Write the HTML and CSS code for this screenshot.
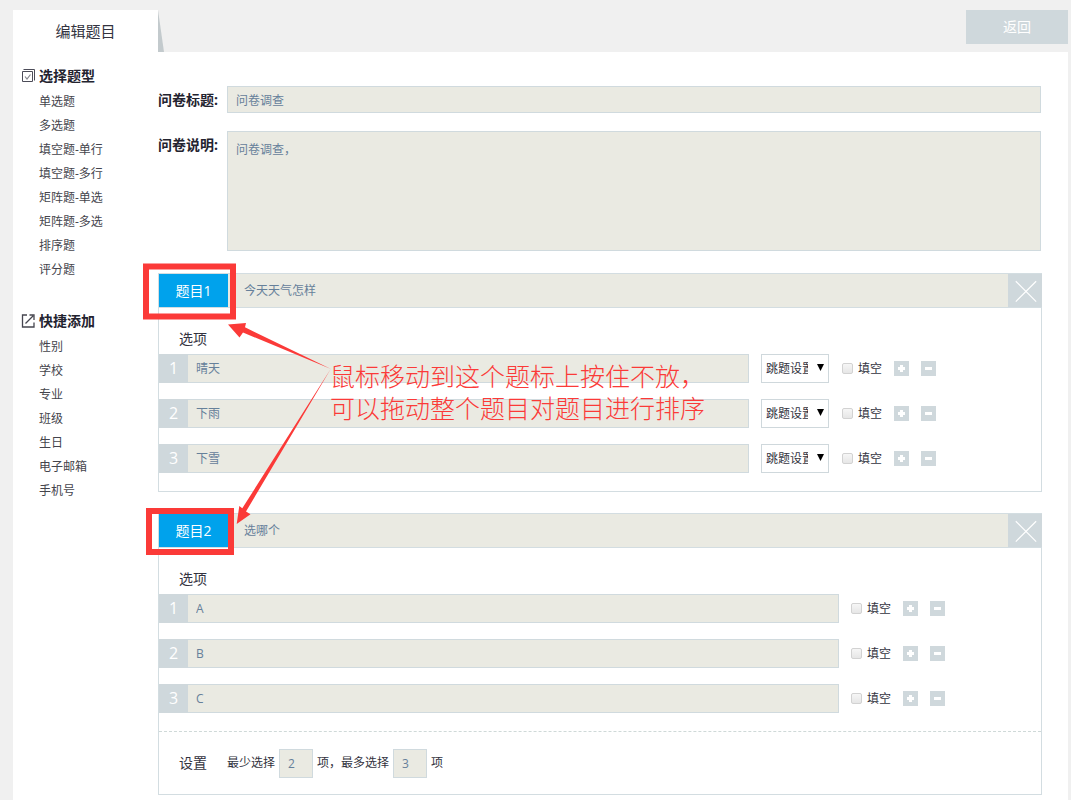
FILE: index.html
```html
<!DOCTYPE html>
<html lang="zh-CN">
<head>
<meta charset="utf-8">
<title>编辑题目</title>
<link rel="stylesheet" href="styles.css">
</head>
<body>
<svg class="defs" aria-hidden="true">
  <symbol id="plus" viewBox="0 0 15 15"><path d="M6 4h3v2h2v3H9v2H6V9H4V6h2z" fill="#fff"/></symbol>
  <symbol id="minus" viewBox="0 0 15 15"><path d="M4 6h7v3H4z" fill="#fff"/></symbol>
  <symbol id="close" viewBox="0 0 34 34"><path d="M7.500 7.500l21 21M28.500 7.500l-21 21" stroke="#fff" stroke-width="1.200" fill="none"/></symbol>
</svg>
<header class="top">
  <h1 class="tab">编辑题目</h1>
  <span class="fold"></span>
  <button class="back" type="button">返回</button>
</header>
<div class="panel">
  <nav class="side">
    <h2 class="side-title">
      <svg class="side-icon" viewBox="0 0 14 14" fill="none" stroke="#4c4c58"><path d="M1.500 2.500h10v10h-10z"/><path d="M2.500 .5h11v11" /><path d="M4 7.500l2 2.500 3.500-4.500" stroke="#85858d" stroke-width="1.200"/></svg>
      选择题型</h2>
    <ul class="side-list">
      <li><a href="#">单选题</a></li>
      <li><a href="#">多选题</a></li>
      <li><a href="#">填空题-单行</a></li>
      <li><a href="#">填空题-多行</a></li>
      <li><a href="#">矩阵题-单选</a></li>
      <li><a href="#">矩阵题-多选</a></li>
      <li><a href="#">排序题</a></li>
      <li><a href="#">评分题</a></li>
    </ul>
    <h2 class="side-title">
      <svg class="side-icon" viewBox="0 0 14 14" fill="none" stroke="#45454f" stroke-width="1.300"><path d="M6 1H1.500v12h11.500V8.500M4.500 9.500L12 2M8.500 1H13v5"/></svg>
      快捷添加</h2>
    <ul class="side-list">
      <li><a href="#">性别</a></li>
      <li><a href="#">学校</a></li>
      <li><a href="#">专业</a></li>
      <li><a href="#">班级</a></li>
      <li><a href="#">生日</a></li>
      <li><a href="#">电子邮箱</a></li>
      <li><a href="#">手机号</a></li>
    </ul>
  </nav>
  <main class="main">
    <div class="field">
      <label class="field-label" for="title">问卷标题:</label>
      <input class="box field-box" id="title" type="text" value="问卷调查">
    </div>
    <div class="field">
      <label class="field-label" for="desc">问卷说明:</label>
      <textarea class="box field-box field-area" id="desc">问卷调查，</textarea>
    </div>

    <section class="card">
      <div class="card-head">
        <label class="card-tag" for="q1">题目1</label>
        <input class="card-input" id="q1" type="text" value="今天天气怎样">
        <button class="close" type="button" aria-label="删除题目"><svg><use href="#close"/></svg></button>
      </div>
      <h3 class="card-sub">选项</h3>
      <div class="options">
        <div class="option">
          <label class="num" for="a1">1</label><input class="box option-box" id="a1" type="text" value="晴天">
          <div class="tools tools-wide">
            <span class="pick"><select aria-label="跳题设置"><option>跳题设置</option></select></span>
            <label class="check"><input type="checkbox">填空</label>
            <button class="mini" type="button" aria-label="添加"><svg><use href="#plus"/></svg></button>
            <button class="mini" type="button" aria-label="删除"><svg><use href="#minus"/></svg></button>
          </div>
        </div>
        <div class="option">
          <label class="num" for="a2">2</label><input class="box option-box" id="a2" type="text" value="下雨">
          <div class="tools tools-wide">
            <span class="pick"><select aria-label="跳题设置"><option>跳题设置</option></select></span>
            <label class="check"><input type="checkbox">填空</label>
            <button class="mini" type="button" aria-label="添加"><svg><use href="#plus"/></svg></button>
            <button class="mini" type="button" aria-label="删除"><svg><use href="#minus"/></svg></button>
          </div>
        </div>
        <div class="option">
          <label class="num" for="a3">3</label><input class="box option-box" id="a3" type="text" value="下雪">
          <div class="tools tools-wide">
            <span class="pick"><select aria-label="跳题设置"><option>跳题设置</option></select></span>
            <label class="check"><input type="checkbox">填空</label>
            <button class="mini" type="button" aria-label="添加"><svg><use href="#plus"/></svg></button>
            <button class="mini" type="button" aria-label="删除"><svg><use href="#minus"/></svg></button>
          </div>
        </div>
      </div>
    </section>

    <section class="card">
      <div class="card-head">
        <label class="card-tag" for="q2">题目2</label>
        <input class="card-input" id="q2" type="text" value="选哪个">
        <button class="close" type="button" aria-label="删除题目"><svg><use href="#close"/></svg></button>
      </div>
      <h3 class="card-sub">选项</h3>
      <div class="options">
        <div class="option">
          <label class="num" for="b1">1</label><input class="box option-box" id="b1" type="text" value="A">
          <div class="tools">
            <label class="check"><input type="checkbox">填空</label>
            <button class="mini" type="button" aria-label="添加"><svg><use href="#plus"/></svg></button>
            <button class="mini" type="button" aria-label="删除"><svg><use href="#minus"/></svg></button>
          </div>
        </div>
        <div class="option">
          <label class="num" for="b2">2</label><input class="box option-box" id="b2" type="text" value="B">
          <div class="tools">
            <label class="check"><input type="checkbox">填空</label>
            <button class="mini" type="button" aria-label="添加"><svg><use href="#plus"/></svg></button>
            <button class="mini" type="button" aria-label="删除"><svg><use href="#minus"/></svg></button>
          </div>
        </div>
        <div class="option">
          <label class="num" for="b3">3</label><input class="box option-box" id="b3" type="text" value="C">
          <div class="tools">
            <label class="check"><input type="checkbox">填空</label>
            <button class="mini" type="button" aria-label="添加"><svg><use href="#plus"/></svg></button>
            <button class="mini" type="button" aria-label="删除"><svg><use href="#minus"/></svg></button>
          </div>
        </div>
      </div>
      <div class="settings">
        <h3 class="settings-title">设置</h3>
        <label for="min">最少选择</label>
        <input class="box count" id="min" type="text" value="2">
        <label for="max">项，最多选择</label>
        <input class="box count" id="max" type="text" value="3">
        <span>项</span>
      </div>
    </section>
  </main>
</div>

<div class="notes">
  <svg class="arrows" viewBox="0 0 720 560" fill="#fb3a38">
    <path d="M228 324.500l18-1.500-1 4.300L331 369l-88-36.500-3.500 5z"/>
    <path d="M331 368.500L246 511.500l4.500 2.800L236.700 524l2.600-18 3 2.300z"/>
    <path d="M146 266.500h87v50h-87z" fill="none" stroke="#fb3a38" stroke-width="6"/>
    <path d="M149 511h82v41h-82z" fill="none" stroke="#fb3a38" stroke-width="6"/>
  </svg>
  <p class="note">鼠标移动到这个题标上按住不放，<br>可以拖动整个题目对题目进行排序</p>
</div>
</body>
</html>
```

FILE: styles.css
```css
* { box-sizing: border-box; }

body {
  position: relative;
  display: flex;
  flex-direction: column;
  min-height: 100vh;
  margin: 0;
  padding-left: 13px;
  padding-right: 3px;
  background: #f0f0f0;
  color: #333340;
  font: 12px/24px "Open Sans", "Noto Sans CJK SC", sans-serif;
}

h1, h2, h3, ul, p { margin: 0; padding: 0; }
ul { list-style: none; }
a { color: inherit; text-decoration: none; }
input, select, textarea, button { margin: 0; border: 0; border-radius: 0; font: inherit; outline: 0; }
button { padding: 0; cursor: pointer; }
.defs { position: absolute; width: 0; height: 0; }

.top { display: flex; align-items: flex-start; height: 52px; padding-top: 10px; }
.tab { width: 145px; height: 42px; background: #fff; font-size: 15px; font-weight: 400; line-height: 42px; text-align: center; }
.fold { width: 6px; height: 42px; background: #c3cacd; clip-path: polygon(0 0, 100% 100%, 0 100%); }
.back { width: 102px; height: 34px; margin-left: auto; background: #cfd8dc; color: #fff; font-size: 14px; }

.panel { display: flex; flex: 1; background: #fff; }
.side { width: 145px; padding: 12px 8px 0; }
.side-title { display: flex; align-items: center; gap: 4px; color: #23232f; font-size: 14px; font-weight: 700; }
.side-icon { width: 14px; height: 14px; }
.side-list { padding: 2px 0 27px 18px; color: #44444c; }

.main { flex: 1; min-width: 0; padding: 34px 26px 5px 0; }
.box { padding: 0 8px; border: 1px solid #d0dade; background: #eaeae2; color: #66809a; }
.field { display: flex; align-items: flex-start; margin-bottom: 18px; padding-right: 1px; }
.field-label { width: 69px; color: #23232f; font-size: 14px; font-weight: 700; line-height: 27px; }
.field-box { flex: 1; min-width: 0; height: 27px; }
.field-area { display: block; height: 120px; padding-top: 6px; resize: none; }
.field + .card { margin-top: 22px; }

.card { margin-bottom: 21px; border: 1px solid #d3dde1; border-top: 0; }
.card-head { display: flex; height: 35px; margin-right: -1px; border: solid #d3dde1; border-width: 1px 0; background: #eaeae2; }
.card-tag { width: 69px; background: #00a2ec; color: #fff; font-size: 14px; line-height: 33px; text-align: center; }
.card-input { flex: 1; min-width: 0; padding: 0 16px; background: transparent; color: #66809a; }
.close { width: 34px; background: #cfd8dc; }
.close svg { display: block; width: 34px; height: 33px; }
.card-sub { padding: 19px 20px 3px; font-size: 14px; font-weight: 400; }
.options { display: grid; gap: 16px; padding-bottom: 18px; }
.option { display: flex; height: 29px; }
.num { width: 29px; background: #cfd8dc; color: #fff; font-size: 16px; line-height: 28px; text-align: center; }
.option-box { flex: 1; min-width: 0; border-left: 0; }
.tools { display: flex; align-items: center; width: 202px; padding-left: 12px; }
.tools-wide { width: 292px; }
.pick { position: relative; margin-right: 13px; }
.pick select { display: block; width: 68px; height: 29px; padding: 0 20px 0 4px; border: 1px solid #cfd8dc; background: #fff; color: #333340; appearance: none; text-overflow: clip; }
.pick::after { content: ""; position: absolute; top: 10px; right: 5px; width: 7px; height: 7px; background: #000; clip-path: polygon(0 0, 100% 0, 50% 100%); pointer-events: none; }
.check { display: flex; align-items: center; gap: 5px; margin-right: 12px; }
.check input { width: 11px; height: 11px; border: 1px solid #d2d2d2; border-radius: 2px; background: linear-gradient(#f6f6f6, #e6e6e6); appearance: none; }
.mini { width: 15px; height: 15px; margin-right: 12px; background: #cfd8dc; }
.mini svg { display: block; width: 15px; height: 15px; }

.settings { display: flex; align-items: center; gap: 4px; height: 63px; border-top: 1px dashed #cfd9d8; padding-left: 20px; }
.settings-title { margin-right: 16px; font-size: 14px; font-weight: 400; }
.count { width: 34px; height: 29px; }

.notes { position: absolute; top: 0; left: 0; pointer-events: none; }
.arrows { display: block; width: 720px; height: 560px; }
.note { position: absolute; top: 360px; left: 330px; color: #fb3a38; font-size: 25px; font-weight: 300; line-height: 32px; white-space: nowrap; }
```
